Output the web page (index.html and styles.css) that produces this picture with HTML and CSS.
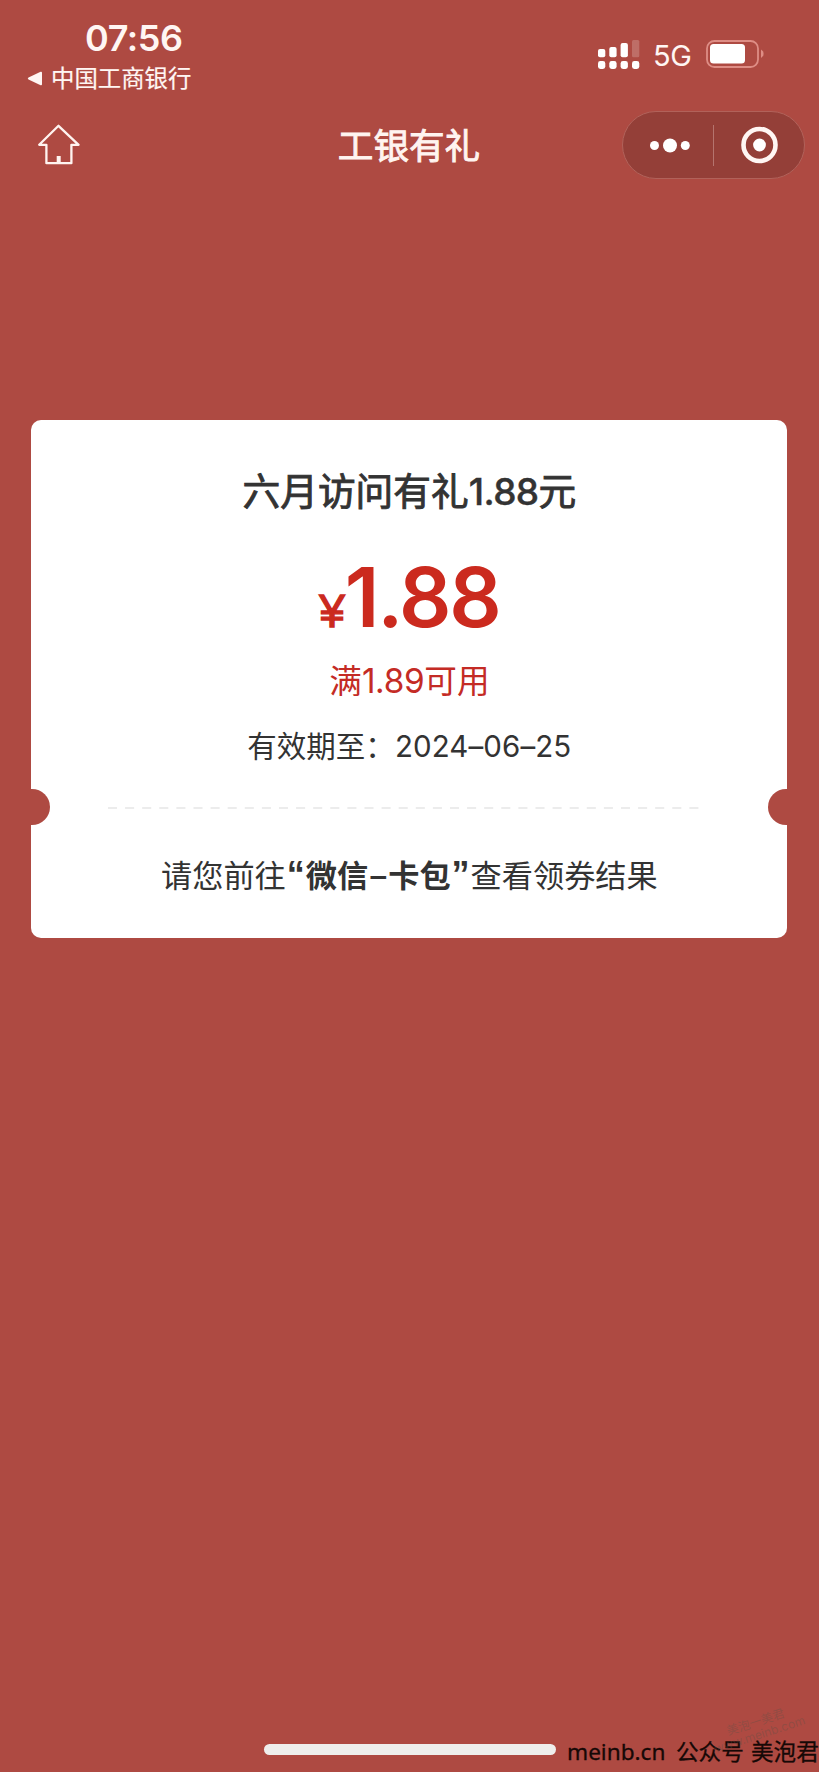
FILE: index.html
```html
<!DOCTYPE html>
<html lang="zh-CN">
<head>
<meta charset="utf-8">
<title>工银有礼</title>
<link rel="stylesheet" href="styles.css">
</head>
<body>
<div class="screen">
  <header class="status">
    <div class="status-left">
      <div class="time">07:56</div>
      <div class="back">
        <svg class="back-arrow" width="16" height="15" viewBox="0 0 16 15"><path d="M1.5 6.6 13.6.8Q15 .3 15 1.8v11.4q0 1.5-1.4 1L1.5 8.4q-1.5-.9 0-1.8z" fill="#fff6f3"/></svg>
        <span class="back-label">中国工商银行</span>
      </div>
    </div>
    <div class="status-right">
      <svg width="42" height="30" viewBox="0 0 42 30" fill="#fff">
        <rect x="0" y="9" width="7.3" height="8.3" rx="2"/><rect x="11.3" y="7" width="7.3" height="10.3" rx="2"/><rect x="22.6" y="3" width="7.3" height="14.3" rx="2"/><rect x="34" y="0" width="7.3" height="17.3" rx="1.5" opacity=".2"/>
        <rect x="0" y="21" width="7.3" height="8" rx="2.4"/><rect x="11.3" y="21" width="7.3" height="8" rx="2.4"/><rect x="22.6" y="21" width="7.3" height="8" rx="2.4"/><rect x="34" y="21" width="7.3" height="8" rx="2.4"/>
      </svg>
      <span class="network">5G</span>
      <svg width="58" height="28" viewBox="0 0 58 28">
        <rect x="1" y="1" width="51" height="26" rx="7.5" fill="none" stroke="#de8d85" stroke-width="1.8"/>
        <rect x="4" y="4" width="35" height="19.5" rx="3.5" fill="#fff"/>
        <path d="M55 9.5q2.6 1.2 2.6 4.3T55 18z" fill="#de8d85"/>
      </svg>
    </div>
  </header>
  <nav class="nav">
    <svg class="home" width="43" height="42" viewBox="0 0 43 42" fill="none" stroke="#fff4f0" stroke-width="2.3" stroke-linejoin="round"><path d="M21.5 1.8 2.2 20.8h7.2v18.4h25V20.8h7.2z"/><path d="M21.7 32v7" stroke-width="4"/></svg>
    <h1 class="nav-title">工银有礼</h1>
    <div class="capsule">
      <svg width="182" height="66" viewBox="0 0 182 66" fill="#fff"><circle cx="31.5" cy="33.5" r="4.5"/><circle cx="47" cy="33.5" r="7"/><circle cx="62.3" cy="33.5" r="4.5"/><path d="M90.5 13v41" stroke="#b5746e" stroke-width="1"/><circle cx="136.5" cy="33" r="16" fill="none" stroke="#fff6f3" stroke-width="4.6"/><circle cx="136.5" cy="33" r="6.4"/></svg>
    </div>
  </nav>
  <main class="card">
    <h2 class="card-title">六月访问有礼<span class="title-num">1.88</span>元</h2>
    <div class="amount"><span class="yen">¥</span><span class="num">1.88</span></div>
    <p class="condition">满<span class="cond-num">1.89</span>可用</p>
    <p class="expiry">有效期至：<span class="date">2024–06–25</span></p>
    <div class="divider">
      <span class="notch notch-left"></span>
      <svg class="dashes" width="598" height="2" viewBox="0 0 598 2"><path d="M0 1h598" stroke="#ececec" stroke-width="2" stroke-dasharray="9 8.1"/></svg>
      <span class="notch notch-right"></span>
    </div>
    <p class="notice">请您前往<b class="strong"><span class="quote">“</span>微信<span class="dash">–</span>卡包<span class="quote">”</span></b>查看领券结果</p>
  </main>
  <footer class="footer">
    <div class="home-bar"></div>
    <div class="source"><span class="site">meinb.cn</span><span class="account">公众号</span><span class="author">美泡君</span></div>
    <div class="stamp">美泡一美君<br>www.meinb.com</div>
  </footer>
</div>
</body>
</html>
```
FILE: styles.css
```css
* { box-sizing: border-box; }
body { margin: 0; background: #ae4a42; font-family: Inter, "Noto Sans CJK SC", sans-serif; }
h1, h2, p { margin: 0; font-weight: 400; white-space: nowrap; }
svg { display: block; flex: none; }
.screen { width: 819px; height: 1772px; display: flex; flex-direction: column; position: relative; overflow: hidden; background: #ae4a42; }

.status { height: 100px; display: flex; justify-content: space-between; color: #fff6f3; }
.status-left { padding: 17px 0 0 27px; }
.time { padding-left: 58px; height: 43px; line-height: 43px; font-size: 36px; font-weight: 560; letter-spacing: -0.4px; }
.back { display: flex; align-items: center; gap: 8px; height: 37px; }
.back-label { font-size: 23.4px; line-height: 36px; -webkit-text-stroke: .2px #fff6f3; }
.status-right { display: flex; align-items: flex-start; padding: 40px 55px 0 0; }
.network { width: 39px; margin: 0 14px 0 13px; line-height: 32px; font-size: 29px; letter-spacing: -0.5px; }

.nav { height: 90px; padding: 0 14px 0 37px; display: grid; grid-template-columns: 183px 1fr 183px; align-items: center; }
.home { margin-top: -1px; }
.nav-title { padding-top: 4px; text-align: center; font-size: 35.6px; line-height: 50px; color: #fff4f0; -webkit-text-stroke: .9px #fff4f0; margin-left: -24px; }
.capsule { width: 183px; height: 68px; border: 1px solid #b1625a; border-radius: 34px; background: #943f38; }

.card { width: 756px; height: 518px; margin: 230px 0 0 31.4px; border-radius: 10px; background: #fff; color: #333; display: flex; flex-direction: column; align-items: center; }
.card-title { margin-top: 43px; height: 56px; line-height: 56px; font-size: 37.7px; -webkit-text-stroke: .9px #333; }
.title-num { font-weight: 500; font-size: 37px; letter-spacing: -.6px; -webkit-text-stroke: .4px #333; }
.amount { margin-top: 29px; height: 100px; display: flex; align-items: baseline; line-height: 100px; color: #cb2a1e; }
.yen { font-family: "Liberation Sans", sans-serif; font-size: 46px; font-weight: 400; -webkit-text-stroke: 1.4px #cb2a1e; margin-right: 0; }
.num { font-size: 82px; font-weight: 580; letter-spacing: -2.2px; }
.condition { margin-top: 9px; height: 48px; line-height: 48px; font-size: 32.6px; color: #c42b25; }
.cond-num { font-size: 33.3px; letter-spacing: -.3px; }
.expiry { margin-top: 19px; height: 44px; line-height: 44px; font-size: 29.5px; }
.date { letter-spacing: .1px; }
.divider { width: 756px; height: 36px; margin-top: 21px; display: flex; align-items: center; justify-content: space-between; }
.dashes { margin: 1px 0 0 -4px; }
.notch { width: 19px; height: 36px; background: #ae4a42; }
.notch-left { border-radius: 0 18px 18px 0; }
.notch-right { border-radius: 18px 0 0 18px; }
.notice { margin-top: 26px; height: 48px; line-height: 48px; font-size: 31.2px; }
.strong { font-weight: 700; }
.quote, .dash { display: inline-block; width: 20px; text-align: center; }
.quote { font-family: "Liberation Sans", sans-serif; font-size: 36px; font-weight: 700; }
.dash { font-weight: 500; }

.footer { margin-top: auto; height: 72px; display: flex; padding: 44px 0 0 264px; position: relative; }
.home-bar { flex: none; width: 292px; height: 11px; border-radius: 6px; background: #efeeec; }
.source { display: flex; margin: -9px 0 0 11px; height: 34px; line-height: 34px; font-family: "Noto Sans", "Noto Sans CJK SC", sans-serif; font-size: 22.6px; color: #160806; white-space: nowrap; -webkit-text-stroke: .3px #160806; }
.site { width: 109px; }
.account { width: 75px; }
.stamp { position: absolute; right: 14px; top: 15px; font-size: 12px; line-height: 13px; color: rgba(90, 80, 70, .35); transform: rotate(-18deg); text-align: center; }
```
